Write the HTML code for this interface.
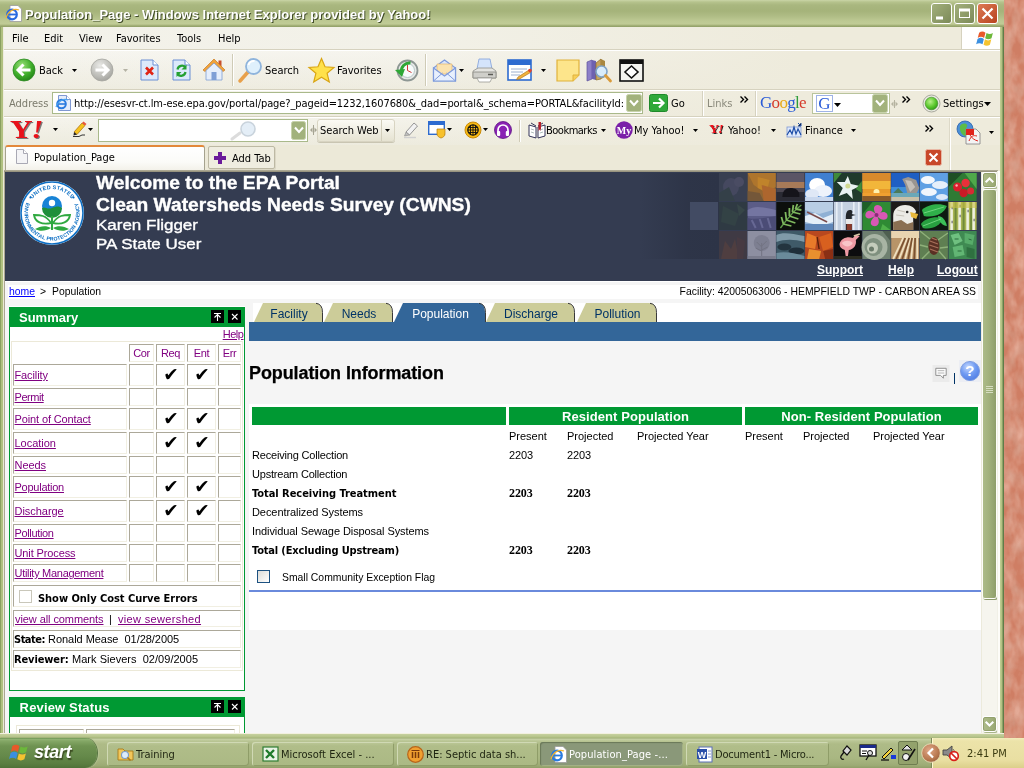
<!DOCTYPE html>
<html><head><meta charset="utf-8"><title>Population_Page</title>
<style>
*{box-sizing:border-box;margin:0;padding:0}
html,body{width:1024px;height:768px;overflow:hidden}
html{background:#cf7e64}
body{opacity:.999}
body{position:relative;background:#d2836a;font-family:"DejaVu Sans Condensed","DejaVu Sans","Liberation Sans",sans-serif;font-size:11px;color:#000}
.abs,.abs>*,.tk>*,.sbb>*,#thumb>*,.wb>*{position:absolute}
.ui{font-family:"DejaVu Sans Condensed","DejaVu Sans","Liberation Sans",sans-serif;font-size:11px;white-space:nowrap}
.ar{font-family:"Liberation Sans",sans-serif}
svg{display:block;overflow:visible}
/* ---------- window frame ---------- */
#desk{left:1004px;top:0;width:20px;height:740px;background:#cf7e64}
#win{left:0;top:0;width:1004px;height:738px;background:#efecdf}
#title{left:0;top:0;width:1004px;height:27px;background:linear-gradient(#cad5a7 0,#b6c38d 2px,#a9b77f 5px,#a5b37a 11px,#afbc85 16px,#bdc993 21px,#c0cb96 24px,#a3b077 25.5px,#8f9d66 27px)}
#title .t{left:25px;top:7px;color:#fff;font-weight:bold;font-size:13px;font-family:"Liberation Sans",sans-serif;text-shadow:1px 1px 0 #3f4a28;white-space:nowrap}
.wb{top:3px;width:21px;height:21px;border:1px solid #fff;border-radius:3px;background:linear-gradient(135deg,#a3b07c,#7c8a58)}
#bL{left:0;top:27px;width:3px;height:711px;background:linear-gradient(90deg,#8aa060 0,#8aa060 1px,#b0c080 1px,#b0c080 3px)}
#bL2{left:3px;top:170px;width:2px;height:563px;background:linear-gradient(90deg,#ebe8d6 0,#ebe8d6 1px,#aaa692 1px)}
#bT2{left:4px;top:170px;width:994px;height:2px;background:linear-gradient(#b5b19c,#8f8b76)}
#bR{left:1000px;top:27px;width:4px;height:711px;background:linear-gradient(90deg,#c3d096 0,#aebd7e 2px,#6a8450 3px,#55743f 4px)}
#bR2{left:997px;top:171px;width:3px;height:562px;background:linear-gradient(90deg,#f1f0e6 0,#f1f0e6 1px,#fdfcf8 1px)}
#bB{left:0;top:733px;width:1004px;height:5px;background:linear-gradient(#f3f1e2 0,#f0eedc 1.5px,#c3cf9b 1.5px,#b5c389 4px,#a3b378 5px)}
/* ---------- chrome bars ---------- */
#menubar{left:4px;top:27px;width:996px;height:23px;background:linear-gradient(90deg,rgba(238,235,220,0) 0,rgba(238,235,220,.15) 40%,rgba(238,235,220,.6) 60%,#eeebdc 80%),#f3f2ea;box-shadow:inset 0 -1px 0 #d6d2bf}
#menubar span{top:5px}
#tb{left:4px;top:50px;width:996px;height:40px;background:linear-gradient(90deg,rgba(238,235,220,0) 0,rgba(238,235,220,.15) 40%,rgba(238,235,220,.6) 60%,#eeebdc 80%),linear-gradient(#f7f6f1,#eeece0);box-shadow:inset 0 1px 0 #fff,inset 0 -1px 0 #d6d2bf}
#ab{left:4px;top:90px;width:996px;height:27px;background:linear-gradient(90deg,rgba(238,235,220,0) 0,rgba(238,235,220,.15) 40%,rgba(238,235,220,.6) 60%,#eeebdc 80%),linear-gradient(#f5f4ed,#eeece0);box-shadow:inset 0 1px 0 #fff,inset 0 -1px 0 #d6d2bf}
#yb{left:4px;top:117px;width:996px;height:28px;background:linear-gradient(90deg,rgba(238,235,220,0) 0,rgba(238,235,220,.15) 40%,rgba(238,235,220,.6) 60%,#eeebdc 80%),linear-gradient(#f5f4ed,#edebde);box-shadow:inset 0 1px 0 #fff}
#tabrow{left:4px;top:145px;width:996px;height:26px;background:#ece9d8}

/* ---------- page ---------- */
#page{left:5px;top:171px;width:976px;height:562px;background:#f5f5f5;overflow:hidden;font-family:"Liberation Sans",sans-serif;font-size:11px}
#page a{color:#800080;text-decoration:underline}
#banner{left:0;top:0;width:976px;height:110px;background:#343c51}
#banner .h{left:91px;color:#fff;white-space:nowrap;transform-origin:0 0;-webkit-text-stroke:.35px #fff}
#banner .lnk{top:92px;color:#fff;font-weight:bold;font-size:12px;text-decoration:underline}
#crumb{left:3px;top:114px;width:970px;height:14px;background:#fff;box-shadow:0 -4px 0 -0px #f5f5f5}
#crumb span{top:1px;white-space:nowrap;font-size:10.4px}
/* summary panel */
.pnl{border:1px solid #009933;background:#fff}
.pnl .hd{left:0;top:0;width:100%;height:20px;background:#009933;color:#fff;font-weight:bold;font-size:13px}
.pnl .hd b{left:10px;top:3px;white-space:nowrap}
.pnl .hd i{top:3px;width:13px;height:13px;background:#000}
.cell>*{position:absolute}
.cell{border:1px solid;border-color:#aca899 #f1efe2 #f1efe2 #aca899;background:#fff;white-space:nowrap}
.ck{font-family:"DejaVu Sans",sans-serif;font-size:18.5px;font-weight:bold;text-align:center;line-height:19px;text-indent:1px}
/* tabs */
.tab{top:132px;height:19px;font-size:12px;color:#003366;text-align:center;line-height:19px}
/* main */
.gh{height:18px;background:#009933;color:#fff;font-weight:bold;font-size:13px;text-align:center;line-height:19px;letter-spacing:.06px}
.r{white-space:nowrap;font-size:11px;letter-spacing:-0.1px}
.bd{font-family:"DejaVu Sans Condensed",sans-serif;font-weight:bold;letter-spacing:-0.12px}
.tm{font-family:"Liberation Serif",serif;font-weight:bold;font-size:12px}

/* ---------- scrollbar ---------- */
#sb{left:981px;top:171px;width:16px;height:562px;background:#f6f5ee;box-shadow:inset 1px 0 0 #eceadb}
.sbb{left:2px;width:13px;height:14px;border:1px solid #93a16d;border-radius:2px;background:linear-gradient(90deg,#adbb88,#9aa973);box-shadow:0 0 0 1px #fff,1px 1px 0 1px #a9b58a}
#thumb{left:2px;top:19px;width:13px;height:408px;border:0;box-shadow:0 0 0 1px #fdfdf8,1px 1px 0 1px #8d9a6c;border-radius:2px;background:linear-gradient(90deg,#adbb88,#a2b17c 45%,#8f9e6a)}
/* ---------- taskbar ---------- */
#task{left:0;top:738px;width:1024px;height:30px;background:linear-gradient(#9aaa72 0,#c8d2a7 1px,#b9c594 3px,#aebb87 6px,#a9b782 20px,#9eac76 27px,#909f68 30px)}
#start{left:0;top:0;width:97px;height:30px;border-radius:0 12px 12px 0/0 15px 15px 0;background:linear-gradient(#5d8a45 0,#94b476 1px,#84a766 3px,#6f9352 8px,#65894a 18px,#5a7d40 26px,#4f7238 30px);box-shadow:1px 0 1px #4a6a36,2px 0 1px #c2cf9e}
#start b{left:34px;top:4px;font-family:"Liberation Sans",sans-serif;font-style:italic;font-weight:bold;font-size:18px;color:#fff;text-shadow:1px 2px 1px #3c4c22;letter-spacing:-.4px}
.tk{top:4px;height:24px;border-radius:3px;background:linear-gradient(#bcc898,#b0bd89 4px,#abb984);box-shadow:inset 1px 1px 0 #d0d9b4,inset -1px -1px 0 #8f9d68;color:#1e2410}
.tk span{left:29px;top:6px;font-family:"DejaVu Sans Condensed","Liberation Sans",sans-serif;font-size:11px;white-space:nowrap}
.tk svg{left:10px;top:4px}
.tk.on{background:#8a9879;box-shadow:inset 1px 1px 1px #6a7858,inset -1px -1px 0 #a3b085;color:#fff}
#tray{left:932px;top:0;width:92px;height:30px;background:linear-gradient(#f3ecbb 0,#ece3a9 3px,#e9dfa2 22px,#dccf8a 30px);box-shadow:inset 1px 0 0 #fff8d0,-1px 0 0 #7d8a58}
#tray span{left:35px;top:9px;font-family:"DejaVu Sans Condensed","Liberation Sans",sans-serif;font-size:11px;color:#3a3a10;white-space:nowrap}
</style></head><body>
<div id="desk" class="abs"></div><svg class="abs" style="left:1004px;top:0" width="20" height="738"><defs><filter id="tx" x="0" y="0" width="100%" height="100%"><feTurbulence type="fractalNoise" baseFrequency="0.09 0.05" numOctaves="3" seed="7"/><feColorMatrix type="matrix" values="0 0 0 0 0.86  0 0 0 0 0.55  0 0 0 0 0.45  1.6 0 0 0 -0.55"/></filter><filter id="tx2" x="0" y="0" width="100%" height="100%"><feTurbulence type="fractalNoise" baseFrequency="0.12 0.07" numOctaves="2" seed="3"/><feColorMatrix type="matrix" values="0 0 0 0 0.66  0 0 0 0 0.36  0 0 0 0 0.27  0 1.8 0 0 -0.75"/></filter></defs><rect width="20" height="738" fill="#cf7e64"/><rect width="20" height="738" filter="url(#tx)" opacity=".8"/><rect width="20" height="738" filter="url(#tx2)" opacity=".8"/></svg>
<div id="win" class="abs">
 <div id="title" class="abs"><div class="t">Population_Page - Windows Internet Explorer provided by Yahoo!</div>
  <div class="wb" style="left:931px"><svg width="19" height="19"><path d="M4 14h7" stroke="#fff" stroke-width="3"/></svg></div><div class="wb" style="left:954px"><svg width="19" height="19"><rect x="4.500" y="5.500" width="10" height="8" fill="none" stroke="#fff" stroke-width="1"/><path d="M4 6h11" stroke="#fff" stroke-width="3"/></svg></div><div class="wb" style="left:977px;background:linear-gradient(135deg,#dd7a55,#b8431f)"><svg width="19" height="19"><path d="M4.500 4.500l10 10M14.500 4.500l-10 10" stroke="#fff" stroke-width="2.200"/></svg></div><svg style="left:5px;top:5px" width="17" height="17" viewBox="0 0 17 17"><path d="M5 .5h8l3.500 3.500v12.500H5z" fill="#fff" stroke="#9a9a9a" stroke-width=".8"/><circle cx="7" cy="9.500" r="4.800" fill="none" stroke="#2a6be0" stroke-width="2.200"/><path d="M2.500 9.500h9" stroke="#2a6be0" stroke-width="1.800"/><path d="M1 13c2-7 8-10 13-8" stroke="#f2b330" stroke-width="1.200" fill="none"/></svg>
 </div>
 <div id="menubar" class="abs ui"><span style="left:8px">File</span><span style="left:40px">Edit</span><span style="left:75px">View</span><span style="left:112px">Favorites</span><span style="left:173px">Tools</span><span style="left:214px">Help</span><div style="left:957px;top:0;width:39px;height:22px;background:#fff;border-left:1px solid #d6d2bf"></div><svg style="left:973px;top:3px" width="18" height="17" viewBox="0 0 17 16"><path d="M2 2.500c2-1.500 4-1.500 6 0l-1.300 5c-2-1.500-4-1.500-6 0z" fill="#e8592a"/><path d="M9 2.800c2 1.300 4 1.300 6 0l-1.300 5c-2 1.300-4 1.300-6 0z" fill="#6cb83a"/><path d="M.5 8.500c2-1.500 4-1.500 6 0l-1.300 5c-2-1.500-4-1.500-6 0z" fill="#3b8fe0"/><path d="M7.500 8.800c2 1.300 4 1.300 6 0l-1.300 5c-2 1.300-4 1.300-6 0z" fill="#f5c330"/></svg></div>
 <div id="tb" class="abs ui"><svg style="left:8px;top:8px" width="24" height="24" viewBox="0 0 24 24"><defs><radialGradient id="gb" cx=".4" cy=".3" r=".8"><stop offset="0" stop-color="#9be07a"/><stop offset=".55" stop-color="#3fae2a"/><stop offset="1" stop-color="#1d7a14"/></radialGradient><radialGradient id="gf" cx=".4" cy=".3" r=".8"><stop offset="0" stop-color="#e9e9e6"/><stop offset=".6" stop-color="#bdbdb8"/><stop offset="1" stop-color="#9c9c97"/></radialGradient></defs><circle cx="12" cy="12" r="11" fill="url(#gb)" stroke="#2c8a22" stroke-width=".8"/><path d="M18.5 12H7M11.5 6.5L6 12l5.500 5.500" stroke="#fff" stroke-width="3" fill="none" stroke-linejoin="miter"/></svg>
<span style="left:35px;top:14px">Back</span>
<svg style="left:68px;top:19px" width="5" height="3" viewBox="0 0 5 3"><path d="M0 0h5L2.5 3z" fill="#000"/></svg>
<svg style="left:86px;top:8px" width="24" height="24" viewBox="0 0 24 24"><circle cx="12" cy="12" r="11" fill="url(#gf)" stroke="#a6a6a0" stroke-width=".8"/><path d="M5.5 12H17M12.5 6.500L18 12l-5.500 5.500" stroke="#fff" stroke-width="3" fill="none"/></svg>
<svg style="left:119px;top:19px" width="5" height="3" viewBox="0 0 5 3"><path d="M0 0h5L2.5 3z" fill="#b5b3a5"/></svg>
<svg style="left:136px;top:9px" width="19" height="22" viewBox="0 0 19 22"><path d="M1 1h12l5 5v15H1z" fill="#dce9fb" stroke="#6b8fd4" stroke-width="1"/><path d="M13 1v5h5" fill="#fff" stroke="#6b8fd4"/><path d="M6 8.500l7 7M13 8.500l-7 7" stroke="#e02414" stroke-width="2.600"/></svg>
<svg style="left:168px;top:9px" width="19" height="22" viewBox="0 0 19 22"><path d="M1 1h12l5 5v15H1z" fill="#dce9fb" stroke="#6b8fd4" stroke-width="1"/><path d="M13 1v5h5" fill="#fff" stroke="#6b8fd4"/><path d="M5.500 10.500a4.500 4.500 0 0 1 8-2" stroke="#25a032" stroke-width="2.200" fill="none"/><path d="M14.500 5.500v5h-5z" fill="#25a032"/><path d="M13.500 13a4.500 4.500 0 0 1-8 2" stroke="#25a032" stroke-width="2.200" fill="none"/><path d="M4.500 18v-5h5z" fill="#25a032"/></svg>
<svg style="left:197px;top:7px" width="26" height="25" viewBox="0 0 26 25"><path d="M17.500 3.500h3v6h-3z" fill="#c7502d"/><path d="M2 13L13 2l11 11-2 1.500L13 6l-9 8.500z" fill="#f0a23c" stroke="#c97a1e" stroke-width=".7"/><path d="M5 13.500l8-7.500 8 7.500V23H5z" fill="#e6eefb" stroke="#7f9fd6" stroke-width=".8"/><path d="M10.500 15h5v8h-5z" fill="#7f9fd6"/></svg>
<div style="left:228px;top:4px;width:1px;height:32px;background:#cfcbb6;border-right:1px solid #fff;box-sizing:content-box"></div>
<svg style="left:233px;top:7px" width="27" height="27" viewBox="0 0 27 27"><path d="M3 24l8-9" stroke="#e8a04a" stroke-width="3.500" stroke-linecap="round"/><circle cx="16.500" cy="9.500" r="7.500" fill="#dff0fc" stroke="#8fb4dc" stroke-width="1.800"/><path d="M11.500 8a5.500 5.500 0 0 1 6-4" stroke="#fff" stroke-width="2" fill="none"/></svg>
<span style="left:261px;top:14px">Search</span>
<svg style="left:304px;top:7px" width="27" height="26" viewBox="0 0 27 26"><path d="M13.500 1.500l3.500 8.300 9 .7-6.900 5.800 2.200 8.700-7.800-4.700-7.800 4.700 2.200-8.700L1 10.500l9-.7z" fill="#ffe14a" stroke="#d9a514" stroke-width="1.200"/></svg>
<span style="left:333px;top:14px">Favorites</span>
<svg style="left:390px;top:8px" width="25" height="25" viewBox="0 0 25 25"><circle cx="13.500" cy="12.500" r="10" fill="#e6e8e6" stroke="#8e9794" stroke-width="1.800"/><circle cx="13.500" cy="12.500" r="7" fill="#f7fbfb" stroke="#b9c8c8"/><path d="M13.500 12.500V7M13.500 12.500l4 2" stroke="#c33" stroke-width="1"/><path d="M1 12l7 7 3-8z" fill="#2ea736"/><path d="M7.500 14a8 8 0 0 1 9-9" stroke="#2ea736" stroke-width="3" fill="none"/></svg>
<div style="left:421px;top:4px;width:1px;height:32px;background:#cfcbb6;border-right:1px solid #fff;box-sizing:content-box"></div>
<svg style="left:428px;top:8px" width="25" height="25" viewBox="0 0 25 25"><path d="M1.500 10l11-8 11 8v13h-22z" fill="#dbe6fa" stroke="#7e9bdc" stroke-width="1.200"/><path d="M5 6h15v10H5z" fill="#fbe3b0" stroke="#e0b060" stroke-width=".6"/><path d="M1.500 10l11 8 11-8v13h-22z" fill="#e8f0fd" stroke="#7e9bdc" stroke-width="1.200"/><path d="M1.500 23l9-8M23.500 23l-9-8" stroke="#7e9bdc"/></svg>
<svg style="left:455px;top:19px" width="5" height="3" viewBox="0 0 5 3"><path d="M0 0h5L2.5 3z" fill="#000"/></svg>
<svg style="left:467px;top:8px" width="27" height="25" viewBox="0 0 27 25"><path d="M8 1h11l2 10H6z" fill="#d4e4fb" stroke="#8aa7dc" stroke-width=".9"/><path d="M2 13l5-3h14l4 3v7H2z" fill="#e4e4e0" stroke="#9a9a94" stroke-width=".9"/><path d="M2 14h23v6H2z" fill="#cfcfca" stroke="#8e8e88" stroke-width=".9"/><path d="M6 20h15l-2 4H8z" fill="#fff" stroke="#9a9a94" stroke-width=".8"/><path d="M17 16.500h5" stroke="#5a5a55" stroke-width="1.500"/></svg>
<svg style="left:503px;top:9px" width="26" height="23" viewBox="0 0 26 23"><rect x="1" y="1" width="23" height="20" fill="#fff" stroke="#2d6bd0" stroke-width="1.600"/><rect x="1" y="1" width="23" height="5" fill="#2d6bd0"/><path d="M4 10h16M4 13h12M4 16h9" stroke="#9db0cf" stroke-width="1"/><path d="M11 18l11-7 1.500 2.500-11 6.500-3 .5z" fill="#f2b23c" stroke="#a86b10" stroke-width=".6"/><circle cx="23" cy="11.500" r="1.800" fill="#e2452c"/></svg>
<svg style="left:537px;top:19px" width="5" height="3" viewBox="0 0 5 3"><path d="M0 0h5L2.5 3z" fill="#000"/></svg>
<svg style="left:552px;top:9px" width="24" height="23" viewBox="0 0 24 23"><path d="M1 1h22v15l-6 6H1z" fill="#fde58b" stroke="#e0b13a" stroke-width="1.200"/><path d="M17 22v-6h6" fill="#f7cf5a" stroke="#e0b13a"/></svg>
<svg style="left:581px;top:7px" width="27" height="27" viewBox="0 0 27 27"><path d="M2 5l5-2v19l-5 2z" fill="#8c7fc8" stroke="#5d529c" stroke-width=".7"/><path d="M7 3l4 1v19l-4-1z" fill="#6d61b0"/><path d="M11 6l5-4v20l-5 1z" fill="#c9a55c" stroke="#8b6b2a" stroke-width=".7"/><path d="M16 2l4 2v16l-4 2z" fill="#a9873f"/><circle cx="16.500" cy="14.500" r="5.500" fill="#d8ecfb" stroke="#7fa3c8" stroke-width="1.600"/><path d="M20.500 18.500l5 5.500" stroke="#d99b3c" stroke-width="2.800" stroke-linecap="round"/></svg>
<svg style="left:615px;top:9px" width="25" height="23" viewBox="0 0 25 23"><rect x="1" y="1" width="23" height="21" fill="#f4f4f0" stroke="#111" stroke-width="1.600"/><rect x="1" y="1" width="23" height="4" fill="#111"/><path d="M12.500 7l6.500 6-6.500 6-6.500-6z" fill="#fff" stroke="#111" stroke-width="1.600"/></svg></div>
 <div id="ab" class="abs ui"><span style="left:5px;top:7px;color:#7b7a6c">Address</span>
<div style="left:48px;top:2px;width:591px;height:22px;background:#fff;border:1px solid #a9b98a"></div>
<svg style="left:51px;top:5px" width="16" height="16" viewBox="0 0 16 16"><path d="M3.500.500h8l4 4v11h-12z" fill="#e4ecfb" stroke="#7f98d2"/><path d="M11.500.500v4h4" fill="#fff" stroke="#7f98d2"/><circle cx="6.500" cy="9" r="4.300" fill="none" stroke="#2a7be0" stroke-width="2"/><path d="M2.500 9h8" stroke="#2a7be0" stroke-width="1.600"/><path d="M1 12c2-6 8-9 12-7" stroke="#4aa3f0" stroke-width="1.200" fill="none"/></svg>
<span style="left:70px;top:7px;letter-spacing:-0.08px">http://esesvr-ct.lm-ese.epa.gov/portal/page?_pageid=1232,1607680&amp;_dad=portal&amp;_schema=PORTAL&amp;facilityId:</span>
<svg style="left:622px;top:4px" width="16" height="18" viewBox="0 0 16 18"><rect x=".5" y=".5" width="15" height="17" rx="2" fill="#a2b27c" stroke="#c7d2ab"/><path d="M4 6.500l4 4.500 4-4.500" stroke="#fff" stroke-width="2" fill="none"/></svg>
<svg style="left:645px;top:4px" width="19" height="18" viewBox="0 0 19 18"><rect x=".5" y=".5" width="18" height="17" rx="2" fill="#2fa83a" stroke="#1f8a2a"/><path d="M4 9h10M10 4.500l4.500 4.500-4.500 4.500" stroke="#fff" stroke-width="2.200" fill="none"/></svg>
<span style="left:667px;top:7px">Go</span>
<div style="left:698px;top:1px;width:2px;height:25px;border-left:1px solid #d6d2c0;border-right:1px solid #fff"></div>
<span style="left:703px;top:7px;color:#8a897b">Links</span>
<svg style="left:736px;top:6px" width="9" height="7" viewBox="0 0 9 7"><path d="M.5.500l3 3-3 3M4.500.500l3 3-3 3" stroke="#000" stroke-width="1.400" fill="none"/></svg>
<div style="left:751px;top:1px;width:2px;height:25px;border-left:1px solid #d6d2c0;border-right:1px solid #fff"></div>
<span style="left:756px;top:3px;font-family:'Liberation Serif',serif;font-size:17px;letter-spacing:-0.7px"><span style="position:static;color:#2a5bd7">G</span><span style="position:static;color:#d63a2a">o</span><span style="position:static;color:#e8a916">o</span><span style="position:static;color:#2a5bd7">g</span><span style="position:static;color:#2f9c3a">l</span><span style="position:static;color:#d63a2a">e</span></span>
<div style="left:808px;top:3px;width:78px;height:21px;background:#fff;border:1px solid #b9c49c"></div>
<div style="left:812px;top:5px;width:17px;height:17px;background:#fff;border:1px solid #9fb3e6;color:#2a5bd7;font-family:'Liberation Serif',serif;font-size:17px;line-height:15px;text-align:center">G</div>
<svg style="left:830px;top:13px" width="7" height="4" viewBox="0 0 7 4"><path d="M0 0h7L3.5 4z" fill="#000"/></svg>
<svg style="left:868px;top:4px" width="16" height="19" viewBox="0 0 16 19"><rect x=".5" y=".5" width="15" height="18" rx="2" fill="#a2b27c" stroke="#c7d2ab"/><path d="M4 6.500l4 4.500 4-4.500" stroke="#fff" stroke-width="2" fill="none"/></svg>
<svg style="left:887px;top:10px" width="7" height="8" viewBox="0 0 7 8"><path d="M3.500 0v8" stroke="#b5b3a0"/><path d="M0 4l2.500-2.500v5zM7 4l-2.500-2.500v5z" fill="#b5b3a0"/></svg>
<svg style="left:898px;top:6px" width="9" height="7" viewBox="0 0 9 7"><path d="M.5.500l3 3-3 3M4.500.500l3 3-3 3" stroke="#000" stroke-width="1.400" fill="none"/></svg>
<svg style="left:918px;top:4px" width="19" height="19" viewBox="0 0 19 19"><defs><radialGradient id="gs" cx=".4" cy=".35" r=".7"><stop offset="0" stop-color="#b8f08a"/><stop offset=".6" stop-color="#5cc82e"/><stop offset="1" stop-color="#2f9a18"/></radialGradient></defs><circle cx="9.500" cy="9.500" r="8.500" fill="#e9e9e2" stroke="#a8a89c"/><circle cx="9.500" cy="9.500" r="6.300" fill="url(#gs)" stroke="#3a8a22" stroke-width=".6"/></svg>
<span style="left:939px;top:7px">Settings</span>
<svg style="left:980px;top:12px" width="7" height="4" viewBox="0 0 7 4"><path d="M0 0h7L3.5 4z" fill="#000"/></svg></div>
 <div id="yb" class="abs ui"><span style="left:6px;top:0px;font-family:'Liberation Serif',serif;font-weight:bold;font-size:25px;color:#e8111a;letter-spacing:-1px;line-height:26px;text-shadow:1px 1px 0 #7a7a7a;transform:scaleX(1.25);transform-origin:0 0">Y<i style="position:static">!</i></span>
<svg style="left:49px;top:11px" width="5" height="3" viewBox="0 0 5 3"><path d="M0 0h5L2.5 3z" fill="#000"/></svg>
<svg style="left:68px;top:4px" width="17" height="17" viewBox="0 0 17 17"><path d="M2 11l8-9 3 2.500-8 9z" fill="#f6c21c" stroke="#a86b10" stroke-width=".7"/><path d="M10 2l1.500-1.500 3 2.500L13 4.500z" fill="#e8553a"/><path d="M2 11l-.5 3.500 3.500-1z" fill="#222"/><path d="M1 15.500h6l3-1.500h3" stroke="#333" stroke-width="1" fill="none"/></svg>
<svg style="left:84px;top:11px" width="5" height="3" viewBox="0 0 5 3"><path d="M0 0h5L2.5 3z" fill="#000"/></svg>
<div style="left:94px;top:2px;width:210px;height:23px;background:#fff;border:1px solid #a9b98a"></div>
<svg style="left:226px;top:4px" width="30" height="20" viewBox="0 0 30 20"><path d="M2 18l8-6" stroke="#dcdcdc" stroke-width="3" stroke-linecap="round"/><circle cx="18" cy="8" r="7" fill="#e4eef7" stroke="#c9d3dc" stroke-width="1.600"/></svg>
<svg style="left:287px;top:4px" width="15" height="19" viewBox="0 0 15 19"><rect x=".5" y=".5" width="14" height="18" rx="2" fill="#a2b27c" stroke="#c7d2ab"/><path d="M4 6.500l4 4.500 4-4.500" stroke="#fff" stroke-width="2" fill="none"/></svg>
<svg style="left:306px;top:8px" width="7" height="10" viewBox="0 0 7 10"><path d="M3.500 0v10" stroke="#a5a392"/><path d="M0 5l2.500-2.500v5zM7 5l-2.500-2.500v5z" fill="#a5a392"/></svg>
<div style="left:313px;top:2px;width:78px;height:23px;border:1px solid #d8d4c2;border-radius:3px;background:linear-gradient(#fbfaf4,#e6e3d2);box-shadow:0 1px 0 #c9c5b2"></div>
<div style="left:377px;top:3px;width:1px;height:21px;background:#d2cebb"></div>
<span style="left:316px;top:7px">Search Web</span>
<svg style="left:381px;top:12px" width="5" height="3" viewBox="0 0 5 3"><path d="M0 0h5L2.5 3z" fill="#000"/></svg>
<svg style="left:399px;top:4px" width="17" height="17" viewBox="0 0 17 17"><path d="M3 11l8-9 3.500 3-8 9z" fill="#f2f2f2" stroke="#8a8a8a" stroke-width=".9"/><path d="M3 11l-1.500 4 5-1z" fill="#bdbdbd" stroke="#8a8a8a" stroke-width=".6"/><path d="M1 16.500h12" stroke="#d0d0d0" stroke-width="1.400"/></svg>
<svg style="left:424px;top:4px" width="18" height="17" viewBox="0 0 18 17"><rect x=".7" y=".7" width="15.600" height="12.600" fill="#fff" stroke="#2d6bd0" stroke-width="1.400"/><rect x=".7" y=".7" width="15.600" height="3.300" fill="#2d6bd0"/><path d="M9 8h8v5c0 2-2 3.500-4 4-2-.5-4-2-4-4z" fill="#f7c12c" stroke="#b47d0e" stroke-width=".7"/></svg>
<svg style="left:443px;top:11px" width="5" height="3" viewBox="0 0 5 3"><path d="M0 0h5L2.5 3z" fill="#000"/></svg>
<svg style="left:460px;top:4px" width="18" height="18" viewBox="0 0 18 18"><circle cx="9" cy="9" r="8" fill="#f7b912" stroke="#c98a08" stroke-width="1"/><circle cx="9" cy="9" r="5.200" fill="none" stroke="#111" stroke-width="1.200"/><path d="M3.800 9h10.400M9 3.800v10.400M6.500 4.500v9M11.500 4.500v9M4.500 6.500h9M4.500 11.500h9" stroke="#111" stroke-width=".9"/></svg>
<svg style="left:479px;top:11px" width="5" height="3" viewBox="0 0 5 3"><path d="M0 0h5L2.5 3z" fill="#000"/></svg>
<svg style="left:490px;top:4px" width="18" height="18" viewBox="0 0 18 18"><circle cx="9" cy="9" r="8.500" fill="#8a22b4" stroke="#5d1480" stroke-width=".8"/><path d="M4 11.500V9a5 5 0 0 1 10 0v2.500" stroke="#fff" stroke-width="1.700" fill="none"/><rect x="3" y="10" width="3.200" height="5" rx="1" fill="#fff"/><rect x="11.800" y="10" width="3.200" height="5" rx="1" fill="#fff"/></svg>
<div style="left:515px;top:3px;width:2px;height:22px;border-left:1px solid #cfcbb6;border-right:1px solid #fff"></div>
<svg style="left:524px;top:4px" width="18" height="18" viewBox="0 0 18 18"><path d="M1 4l7 2v11l-7-2z" fill="#fff" stroke="#35355a" stroke-width="1"/><path d="M17 4l-7 2v11l7-2z" fill="#fff" stroke="#35355a" stroke-width="1"/><path d="M3 2l5 3M15 2l-5 3" stroke="#35355a"/><path d="M10.500 1h2.500v9l-1.200-1.500L10.500 10z" fill="#b8202a"/><path d="M3 8l3 1M3 11l3 1M12 9l3-1M12 12l3-1" stroke="#9aa" stroke-width=".8"/></svg>
<span style="left:542px;top:7px;letter-spacing:-.5px">Bookmarks</span>
<svg style="left:597px;top:12px" width="5" height="3" viewBox="0 0 5 3"><path d="M0 0h5L2.5 3z" fill="#000"/></svg>
<svg style="left:611px;top:4px" width="18" height="18" viewBox="0 0 18 18"><circle cx="9" cy="9" r="8.700" fill="#7a1fa8"/><text x="9" y="12.500" text-anchor="middle" font-family="Liberation Serif, serif" font-weight="bold" font-size="10" fill="#fff">My</text></svg>
<span style="left:630px;top:7px">My Yahoo!</span>
<svg style="left:689px;top:12px" width="5" height="3" viewBox="0 0 5 3"><path d="M0 0h5L2.5 3z" fill="#000"/></svg>
<span style="left:705px;top:6px;font-family:'Liberation Serif',serif;font-weight:bold;font-size:12px;line-height:13px;color:#f0101a;letter-spacing:-1.2px;transform:scaleX(1.2);transform-origin:0 0;text-shadow:.7px 1px 0 #222">Y<i style="position:static">!</i></span>
<span style="left:724px;top:7px">Yahoo!</span>
<svg style="left:767px;top:12px" width="5" height="3" viewBox="0 0 5 3"><path d="M0 0h5L2.5 3z" fill="#000"/></svg>
<svg style="left:782px;top:5px" width="17" height="16" viewBox="0 0 17 16"><rect x="1" y="5" width="14" height="10" fill="#dfe9fb" stroke="#7f98d2" stroke-width=".8"/><path d="M1 13l3-5 2 4 2-7 2 7 2-5 3 6" stroke="#1f4fa8" stroke-width="1.200" fill="none"/><path d="M12 1l3 3M15 1v3h-3" stroke="#1f4fa8" stroke-width="1"/></svg>
<span style="left:801px;top:7px">Finance</span>
<svg style="left:847px;top:12px" width="5" height="3" viewBox="0 0 5 3"><path d="M0 0h5L2.5 3z" fill="#000"/></svg>
<svg style="left:921px;top:8px" width="9" height="7" viewBox="0 0 9 7"><path d="M.5.500l3 3-3 3M4.500.500l3 3-3 3" stroke="#000" stroke-width="1.400" fill="none"/></svg>

<svg style="left:952px;top:3px" width="26" height="25" viewBox="0 0 26 25"><circle cx="9" cy="9" r="8" fill="#4a8fd8" stroke="#2a5fa8" stroke-width=".8"/><path d="M4 6c2-3 6-3 7-1s-2 3-1 5 4 1 5 3-3 4-6 3-6-5-5-10z" fill="#5dbb46"/><path d="M10 9h10l4 4v11H10z" fill="#f4f4f4" stroke="#8a8a8a" stroke-width=".9"/><path d="M10 9h8v6h-8z" fill="#e0231c"/><path d="M13 21c2-5 4-6 8-5M14 15c2 3 4 5 8 6" stroke="#e0231c" stroke-width="1" fill="none"/></svg>
<svg style="left:985px;top:14px" width="5" height="3" viewBox="0 0 5 3"><path d="M0 0h5L2.5 3z" fill="#000"/></svg></div>
 <div id="tabrow" class="abs ui"><div style="left:1px;top:0px;width:200px;height:27px;background:linear-gradient(#fff,#fbfbf8 60%,#f1efe6);border:1px solid #a5a28e;border-top:2px solid #e3883a;border-bottom:0;border-radius:3px 3px 0 0"></div>
<svg style="left:12px;top:4px" width="12" height="15" viewBox="0 0 12 15"><path d="M.5.500h7l4 4v10H.5z" fill="#f4f4f6" stroke="#a9a9b4"/><path d="M7.500.500v4h4" fill="#fff" stroke="#a9a9b4"/></svg>
<span style="left:30px;top:6px">Population_Page</span>
<div style="left:204px;top:1px;width:67px;height:23px;border:1px solid #bdb9a4;border-radius:2px;background:#efede0;box-shadow:1px 1px 0 #dcd8c6"></div>
<svg style="left:210px;top:7px" width="12" height="12" viewBox="0 0 12 12"><path d="M6 0v12M0 6h12" stroke="#6a1a9a" stroke-width="4"/></svg>
<span style="left:228px;top:7px">Add Tab</span>
<svg style="left:921px;top:4px" width="17" height="17" viewBox="0 0 17 17"><rect x=".5" y=".5" width="16" height="16" rx="2" fill="#c8482a" stroke="#e9b9a6"/><path d="M4.500 4.500l8 8M12.500 4.500l-8 8" stroke="#fff" stroke-width="2"/></svg></div>

 <div id="page" class="abs">
  <div id="banner" class="abs">
<svg style="left:14px;top:9px" width="66" height="66" viewBox="-33 -33 66 66">
<circle r="32" fill="#fff"/><circle r="31" fill="none" stroke="#0d6fc4" stroke-width="1.600"/>
<defs><path id="arcT" d="M-24 0A24 24 0 0 1 24 0"/><path id="arcB" d="M-21.14 -17.74A27.6 27.6 0 1 0 21.14 -17.74"/></defs>
<text font-family="Liberation Sans, sans-serif" font-weight="bold" font-size="5.400" fill="#0d6fc4" letter-spacing=".25"><textPath href="#arcT" startOffset="50%" text-anchor="middle">UNITED STATES</textPath></text>
<text font-family="Liberation Sans, sans-serif" font-weight="bold" font-size="5.200" fill="#0d6fc4" letter-spacing=".12"><textPath href="#arcB" startOffset="50%" text-anchor="middle">ENVIRONMENTAL PROTECTION AGENCY</textPath></text>
<circle cx="-21.500" cy="-15.500" r="1.100" fill="#0d6fc4"/><circle cx="21.500" cy="-15.500" r="1.100" fill="#0d6fc4"/>
<circle cx="0" cy="-7" r="10" fill="#1783d6"/><circle cx="0" cy="-10" r="3.200" fill="#fff"/>
<path d="M-10-5c3-2 5 2 10 0s7-2 10 0a10 10 0 0 1-20 0z" fill="#1f8f3a"/>
<path d="M0 17V3" stroke="#2fa83f" stroke-width="2"/>
<path d="M-1 10C-6 2-12 2-18 2c1 7 8 10 17 8z" fill="#fff" stroke="#2fa83f" stroke-width="1.800"/>
<path d="M1 10C6 2 12 2 18 2c-1 7-8 10-17 8z" fill="#fff" stroke="#2fa83f" stroke-width="1.800"/>
<path d="M-1 15c-5-3-11-2-16 1 5 3 11 2 16-1z" fill="#2fa83f"/><path d="M1 15c5-3 11-2 16 1-5 3-11 2-16-1z" fill="#2fa83f"/>
</svg>
<svg style="left:627px;top:1.6px" width="346" height="87" viewBox="0 0 346 87">
<defs><linearGradient id="mf" x1="0" x2="1"><stop offset="0" stop-color="#2d3447" stop-opacity="0"/><stop offset=".6" stop-color="#2d3447" stop-opacity=".9"/><stop offset="1" stop-color="#2d3447" stop-opacity="1"/></linearGradient></defs><rect x="8" y="0" width="79" height="86" fill="url(#mf)"/>
<rect x="58" y="29" width="28" height="28" fill="#424b63"/>




<g transform="translate(87.0,0)" opacity="0.45"><rect width="28" height="28" fill="#3d4453"/><ellipse cx="12" cy="14" rx="8" ry="9" fill="#5a5870"/><ellipse cx="20" cy="9" rx="5" ry="5" fill="#66607a"/><path d="M0 20l10-6 6 14H0z" fill="#34463f"/></g>
<g transform="translate(115.7,0)" opacity="0.92"><rect width="28" height="28" fill="#9a6a30"/><path d="M0 0h28v14l-10 6L6 12z" fill="#b97a2a"/><path d="M10 4l12 3-3 12-9-4z" fill="#cc8a28"/><path d="M14 12l14 4v12H16z" fill="#b86a2c"/><path d="M0 18l12 2 4 8H0z" fill="#7a5a38"/></g>
<g transform="translate(144.4,0)" opacity="1"><rect width="28" height="28" fill="#2a2a33"/><rect width="28" height="9" fill="#5b5566"/><rect y="9" width="28" height="6" fill="#a77a58"/><rect y="15" width="28" height="4" fill="#4b4650"/><path d="M6 24c0-6 3-9 8-9s8 2 9 6v3z" fill="#15141a"/></g>
<g transform="translate(173.1,0)" opacity="1"><rect width="28" height="28" fill="#3f7fd0"/><ellipse cx="12" cy="12" rx="8" ry="7" fill="#fff"/><ellipse cx="18" cy="18" rx="9" ry="6" fill="#eef3fb"/><ellipse cx="7" cy="21" rx="7" ry="5" fill="#dfe8f6"/><rect y="24" width="28" height="4" fill="#c9d8ee"/></g>
<g transform="translate(201.8,0)" opacity="1"><rect width="28" height="28" fill="#1f3a2c"/><path d="M14 3l3 8 9 2-8 4 1 9-6-6-8 3 4-8-6-6 8 0z" fill="#e8f2f2"/><circle cx="14" cy="13" r="2.500" fill="#cfd890"/><path d="M0 0h8l-8 10z" fill="#3f8a3a"/><path d="M28 8v12l-6-4z" fill="#3f8a3a"/></g>
<g transform="translate(230.5,0)" opacity="1"><rect width="28" height="28" fill="#e89a2a"/><rect width="28" height="8" fill="#d88a2c"/><rect y="8" width="28" height="8" fill="#f2b63a"/><circle cx="14" cy="19" r="3" fill="#fff2b0"/><rect y="20" width="28" height="3" fill="#f0a030"/><rect y="23" width="28" height="5" fill="#8a5a28"/></g>
<g transform="translate(259.2,0)" opacity="1"><rect width="28" height="28" fill="#1f5fc4"/><rect y="14" width="28" height="6" fill="#3f8fd8"/><path d="M11 6l6-2 8 3 3 8-4 8-8-3-2-8z" fill="#9a9590"/><path d="M14 7l6 1 4 6-5 5z" fill="#c4bfb8"/><path d="M2 20l5-5 5 5z" fill="#4a7a5a"/><rect y="20" width="28" height="4" fill="#6aa8b8"/><rect y="24" width="28" height="4" fill="#c8c0a8"/></g>
<g transform="translate(287.9,0)" opacity="1"><rect width="28" height="28" fill="#5fa0e4"/><ellipse cx="8" cy="7" rx="7" ry="4" fill="#f4f8fd"/><ellipse cx="20" cy="12" rx="8" ry="4" fill="#e6effa"/><ellipse cx="9" cy="19" rx="8" ry="4" fill="#f0f5fc"/><ellipse cx="22" cy="24" rx="6" ry="3" fill="#dce8f8"/></g>
<g transform="translate(316.6,0)" opacity="1"><rect width="28" height="28" fill="#2f7a34"/><path d="M0 0h14L0 14z" fill="#1f4f24"/><path d="M16 0h12v16z" fill="#4fa84a"/><circle cx="9" cy="14" r="4.500" fill="#d81f2c"/><circle cx="17" cy="10" r="4.200" fill="#e8303a"/><circle cx="15" cy="20" r="4.200" fill="#c81a26"/><circle cx="22" cy="18" r="3.500" fill="#d82a34"/><circle cx="8" cy="12.500" r="1.200" fill="#ffb0b0"/></g>
<g transform="translate(87.0,29)" opacity="0.5"><rect width="28" height="28" fill="#2c3a36"/><path d="M4 4l16 8-4 12L2 20z" fill="#33483a"/><path d="M18 2l8 6-6 6z" fill="#3a5040"/></g>
<g transform="translate(115.7,29)" opacity="0.92"><rect width="28" height="28" fill="#5f5f8c"/><path d="M0 8c6-4 12-4 28 0v6H0z" fill="#7a7aa8"/><path d="M0 16c8 2 16 0 28-2v14H0z" fill="#4e4e7a"/><path d="M4 18l4 8M12 17l3 9M20 16l3 10" stroke="#6c6c9a" stroke-width="2"/></g>
<g transform="translate(144.4,29)" opacity="1"><rect width="28" height="28" fill="#0c0f0c"/><path d="M4 26C10 18 18 8 25 3" stroke="#5f9a4a" stroke-width="1.400" fill="none"/><path d="M7 22l8 2M10 18l9 3M13 14l9 3M16 10l8 2M19 7l6 1M7 22l-2-7M10 18l-1-8M13 14l0-8M16 10l1-7M19 7l2-5" stroke="#7fb85f" stroke-width="1.800"/></g>
<g transform="translate(173.1,29)" opacity="1"><rect width="28" height="28" fill="#8fb0d4"/><path d="M0 0h28v8L14 12 0 8z" fill="#b8cde4"/><path d="M0 14l10-3 8 5 10-4v8l-12 4L0 20z" fill="#e4eef8"/><path d="M2 10l20 10" stroke="#7a4a4a" stroke-width="1.600"/><rect y="22" width="28" height="6" fill="#5f86b8"/></g>
<g transform="translate(201.8,29)" opacity="1"><rect width="28" height="28" fill="#c4d0e0"/><path d="M3 0v28M8 0v28M20 0v28M25 0v28" stroke="#e8eef6" stroke-width="1.600"/><path d="M12 28V16c0-5 1-8 4-8s3 2 2 4l4 1-4 1v14z" fill="#23262a"/><rect x="12" y="17" width="7" height="5" fill="#e8e8e8"/><rect x="13" y="22" width="5" height="6" fill="#8a3a2a"/></g>
<g transform="translate(230.5,29)" opacity="1"><rect width="28" height="28" fill="#2f8a34"/><path d="M0 0h10L0 12z" fill="#1f5f28"/><path d="M14 13C8 4 14 1 18 4s1 7-4 9c7-6 12-2 11 2s-7 4-11-2c5 8 1 12-3 11s-4-6 3-11C6 19 2 16 3 12s6-5 11 1z" fill="#d858b4"/><circle cx="14" cy="13" r="2" fill="#8a2a78"/><path d="M20 22l8 6h-10z" fill="#4fb04a"/></g>
<g transform="translate(259.2,29)" opacity="1"><rect width="28" height="28" fill="#1c1a18"/><path d="M2 28V14c0-7 5-11 12-11 6 0 10 3 11 7l-3 3v15z" fill="#ecebe6"/><path d="M2 28v-8l8-2 6 4 6-2v8z" fill="#8a6f52"/><path d="M19 10l8 2-2 5-5-2z" fill="#e8b83a"/><circle cx="16" cy="10" r="1.300" fill="#222"/><path d="M6 8l8 2M5 13l8 1" stroke="#c8c4ba" stroke-width="1"/></g>
<g transform="translate(287.9,29)" opacity="1"><rect width="28" height="28" fill="#0e1a10"/><path d="M2 8C8 2 20 1 27 4 24 12 14 16 4 14z" fill="#2fb04a"/><path d="M1 22c4-6 14-8 22-6-2 8-12 12-20 10z" fill="#28a040"/><path d="M18 14c4 0 8 4 9 10-4 0-8-4-9-10z" fill="#3cc058"/><path d="M4 11l20-6M3 24l18-7" stroke="#7fe08a" stroke-width=".8"/></g>
<g transform="translate(316.6,29)" opacity="1"><rect width="28" height="28" fill="#a8b454"/><path d="M3 0v28M11 0v28M19 0v28M25 0v28" stroke="#eef0e0" stroke-width="2.600"/><path d="M7 0v28M15 0v28M22.500 0v28" stroke="#6f8a3a" stroke-width="2"/><path d="M3 6h1M11 14h1M19 9h1M25 18h1M3 20h1M11 4h1" stroke="#555" stroke-width="2.600"/><rect width="28" height="6" fill="#c8c04a" opacity=".6"/></g>
<g transform="translate(87.0,58)" opacity="0.5"><rect width="28" height="28" fill="#4b3a38"/><path d="M2 28l4-18 6 8 4-10 4 20z" fill="#6a4030"/><path d="M18 6l8 4-2 18h-6z" fill="#5a3a34"/></g>
<g transform="translate(115.7,58)" opacity="0.8"><rect width="28" height="28" fill="#9c9cae"/><rect width="28" height="28" fill="#a4a4b6"/><circle cx="14" cy="12" r="8" fill="#9090a2"/><path d="M14 12v14M14 16l-5-5M14 15l5-5M14 20l-6-3M14 19l6-3" stroke="#82828f" stroke-width="1"/><rect y="25" width="28" height="3" fill="#8c8c9c"/></g>
<g transform="translate(144.4,58)" opacity="1"><rect width="28" height="28" fill="#3f5a68"/><path d="M0 4c6-3 14-2 28 1v6C18 8 8 8 0 11z" fill="#7f9aa8"/><ellipse cx="8" cy="16" rx="7" ry="3.500" fill="#23343f"/><ellipse cx="20" cy="20" rx="8" ry="3.500" fill="#1f2f3a"/><path d="M0 22c8-2 18 0 28 3v3H0z" fill="#6a8a9a"/></g>
<g transform="translate(173.1,58)" opacity="1"><rect width="28" height="28" fill="#b8481f"/><path d="M2 2l10 4-2 12-10-2z" fill="#e87a2a"/><path d="M14 6l12-4 2 14-10 4z" fill="#d8601f"/><path d="M4 18l12 2-2 8H2z" fill="#e8902f"/><path d="M18 20l10-2v10h-8z" fill="#8a2f14"/><path d="M12 6l2 12" stroke="#5a1f0a" stroke-width="1.400"/></g>
<g transform="translate(201.8,58)" opacity="1"><rect width="28" height="28" fill="#0c0c0e"/><path d="M6 12c2-5 8-7 13-5l3-3 4 1-4 4c1 5-2 9-7 10l-1 7h-2l-1-7c-4-1-6-4-5-7z" fill="#ee9aa4"/><path d="M8 12c3-3 8-3 11 0-2 4-8 5-11 0z" fill="#f8c4c8"/><path d="M20 5l6-2" stroke="#d8c8a8" stroke-width="1.800"/><rect y="25" width="28" height="3" fill="#2a2a1e"/></g>
<g transform="translate(230.5,58)" opacity="1"><rect width="28" height="28" fill="#6f8070"/><circle cx="12" cy="16" r="13" fill="#a8b4a4"/><circle cx="11" cy="16" r="9" fill="#7f907f"/><circle cx="10" cy="17" r="5.500" fill="#c4ccbc"/><circle cx="9" cy="18" r="2.500" fill="#6a7a6a"/><path d="M20 0h8v10z" fill="#4f5f50"/></g>
<g transform="translate(259.2,58)" opacity="1"><rect width="28" height="28" fill="#b89468"/><rect width="28" height="7" fill="#e8d4b0"/><path d="M2 28L12 7M8 28l8-21M14 28l5-21M20 28l2-21M26 28V7" stroke="#f0e0c0" stroke-width="1.800"/><path d="M5 28L14 7M11 28l7-21M17 28l4-21M23 28l1-21" stroke="#7a5030" stroke-width="1.600"/></g>
<g transform="translate(287.9,58)" opacity="1"><rect width="28" height="28" fill="#5f7f52"/><path d="M0 0l10 8M28 2L18 9M0 14l8 2M28 16l-8 1M2 28l8-8M26 28l-7-8" stroke="#8fb07a" stroke-width="1.400"/><ellipse cx="14" cy="15" rx="5.500" ry="9" fill="#5a3024"/><path d="M10 10l8 3M9.500 14l9 3M10 18l8 3M12 7l5 2" stroke="#a8705a" stroke-width="1.200"/></g>
<g transform="translate(316.6,58)" opacity="1"><rect width="28" height="28" fill="#3f8a52"/><path d="M2 4l8-2 4 8-8 4z" fill="#6fc080"/><path d="M16 2l10 2-2 10-8-2z" fill="#58ac6a"/><path d="M4 16l10-2 2 10-10 2z" fill="#62b674"/><path d="M18 16l8 2v10l-8-2z" fill="#2f7040"/><path d="M6 8l4 0M20 8l3 1M9 20l4 0" stroke="#2a6a3a" stroke-width="1"/></g>

</svg>
   <div class="h" style="top:2px;font-weight:bold;font-size:17.5px;transform:scaleX(1.097)">Welcome to the EPA Portal</div>
   <div class="h" style="top:24px;font-weight:bold;font-size:17.5px;transform:scaleX(1.097)">Clean Watersheds Needs Survey (CWNS)</div>
   <div class="h" style="top:45px;font-size:15.3px;transform:scaleX(1.11)">Karen Fligger</div>
   <div class="h" style="top:64px;font-size:15.3px;transform:scaleX(1.11)">PA State User</div>
   <div class="lnk" style="left:812px">Support</div><div class="lnk" style="left:883px">Help</div><div class="lnk" style="left:932px">Logout</div>
  </div>
  <div id="crumb" class="abs"><span style="left:1px;color:#0000ff;text-decoration:underline">home</span><span style="left:32px">&gt;</span><span style="left:44px">Population</span><span style="right:2px">Facility: 42005063006 - HEMPFIELD TWP - CARBON AREA SS</span></div>
  <div class="pnl abs" style="left:4px;top:136px;width:236px;height:384px">
<div class="hd abs" style="left:-1px;top:-1px;width:236px"><b>Summary</b><i style="left:202px"><svg width="13" height="13" viewBox="0 0 13 13"><path d="M3 3.500h7M6.500 3.500V11M3.500 7.500L6.500 4.500L9.500 7.500" stroke="#fff" stroke-width="1.100" fill="none"/></svg></i><i style="left:219px"><svg width="13" height="13" viewBox="0 0 13 13"><path d="M4 4l5.500 5.500M9.500 4L4 9.500" stroke="#fff" stroke-width="1.100" fill="none"/></svg></i></div>
<a style="right:.5px;top:20px;letter-spacing:-.45px">Help</a>
<div style="left:1px;top:33px;width:232px;height:330px;border:1px solid #ece9d8"></div>
<div class="cell" style="left:119px;top:36px;width:25px;height:18px;text-align:center;line-height:17px"><span style="position:static;color:#800080;letter-spacing:-.35px">Cor</span></div>
<div class="cell" style="left:146px;top:36px;width:29px;height:18px;text-align:center;line-height:17px"><span style="position:static;color:#800080;letter-spacing:-.35px">Req</span></div>
<div class="cell" style="left:177px;top:36px;width:29px;height:18px;text-align:center;line-height:17px"><span style="position:static;color:#800080;letter-spacing:-.35px">Ent</span></div>
<div class="cell" style="left:208px;top:36px;width:23px;height:18px;text-align:center;line-height:17px"><span style="position:static;color:#800080;letter-spacing:-.35px">Err</span></div>
<div class="cell" style="left:3px;top:56px;width:114px;height:22px;"><a style="left:.5px;bottom:3px;line-height:13px;letter-spacing:-0.116px">Facility</a></div>
<div class="cell" style="left:119px;top:56px;width:25px;height:22px;"></div>
<div class="cell ck" style="left:146px;top:56px;width:29px;height:22px;">✔</div>
<div class="cell ck" style="left:177px;top:56px;width:29px;height:22px;">✔</div>
<div class="cell" style="left:208px;top:56px;width:23px;height:22px;"></div>
<div class="cell" style="left:3px;top:80px;width:114px;height:18px;"><a style="left:.5px;bottom:1px;line-height:13px;letter-spacing:-0.430px">Permit</a></div>
<div class="cell" style="left:119px;top:80px;width:25px;height:18px;"></div>
<div class="cell" style="left:146px;top:80px;width:29px;height:18px;"></div>
<div class="cell" style="left:177px;top:80px;width:29px;height:18px;"></div>
<div class="cell" style="left:208px;top:80px;width:23px;height:18px;"></div>
<div class="cell" style="left:3px;top:100px;width:114px;height:22px;"><a style="left:.5px;bottom:3px;line-height:13px;letter-spacing:-0.124px">Point of Contact</a></div>
<div class="cell" style="left:119px;top:100px;width:25px;height:22px;"></div>
<div class="cell ck" style="left:146px;top:100px;width:29px;height:22px;">✔</div>
<div class="cell ck" style="left:177px;top:100px;width:29px;height:22px;">✔</div>
<div class="cell" style="left:208px;top:100px;width:23px;height:22px;"></div>
<div class="cell" style="left:3px;top:124px;width:114px;height:22px;"><a style="left:.5px;bottom:3px;line-height:13px;letter-spacing:-0.024px">Location</a></div>
<div class="cell" style="left:119px;top:124px;width:25px;height:22px;"></div>
<div class="cell ck" style="left:146px;top:124px;width:29px;height:22px;">✔</div>
<div class="cell ck" style="left:177px;top:124px;width:29px;height:22px;">✔</div>
<div class="cell" style="left:208px;top:124px;width:23px;height:22px;"></div>
<div class="cell" style="left:3px;top:148px;width:114px;height:18px;"><a style="left:.5px;bottom:1px;line-height:13px;letter-spacing:-0.060px">Needs</a></div>
<div class="cell" style="left:119px;top:148px;width:25px;height:18px;"></div>
<div class="cell" style="left:146px;top:148px;width:29px;height:18px;"></div>
<div class="cell" style="left:177px;top:148px;width:29px;height:18px;"></div>
<div class="cell" style="left:208px;top:148px;width:23px;height:18px;"></div>
<div class="cell" style="left:3px;top:168px;width:114px;height:22px;"><a style="left:.5px;bottom:3px;line-height:13px;letter-spacing:-0.250px">Population</a></div>
<div class="cell" style="left:119px;top:168px;width:25px;height:22px;"></div>
<div class="cell ck" style="left:146px;top:168px;width:29px;height:22px;">✔</div>
<div class="cell ck" style="left:177px;top:168px;width:29px;height:22px;">✔</div>
<div class="cell" style="left:208px;top:168px;width:23px;height:22px;"></div>
<div class="cell" style="left:3px;top:192px;width:114px;height:22px;"><a style="left:.5px;bottom:3px;line-height:13px;letter-spacing:-0.037px">Discharge</a></div>
<div class="cell" style="left:119px;top:192px;width:25px;height:22px;"></div>
<div class="cell ck" style="left:146px;top:192px;width:29px;height:22px;">✔</div>
<div class="cell ck" style="left:177px;top:192px;width:29px;height:22px;">✔</div>
<div class="cell" style="left:208px;top:192px;width:23px;height:22px;"></div>
<div class="cell" style="left:3px;top:216px;width:114px;height:18px;"><a style="left:.5px;bottom:1px;line-height:13px;letter-spacing:-0.344px">Pollution</a></div>
<div class="cell" style="left:119px;top:216px;width:25px;height:18px;"></div>
<div class="cell" style="left:146px;top:216px;width:29px;height:18px;"></div>
<div class="cell" style="left:177px;top:216px;width:29px;height:18px;"></div>
<div class="cell" style="left:208px;top:216px;width:23px;height:18px;"></div>
<div class="cell" style="left:3px;top:236px;width:114px;height:18px;"><a style="left:.5px;bottom:1px;line-height:13px;letter-spacing:-0.122px">Unit Process</a></div>
<div class="cell" style="left:119px;top:236px;width:25px;height:18px;"></div>
<div class="cell" style="left:146px;top:236px;width:29px;height:18px;"></div>
<div class="cell" style="left:177px;top:236px;width:29px;height:18px;"></div>
<div class="cell" style="left:208px;top:236px;width:23px;height:18px;"></div>
<div class="cell" style="left:3px;top:256px;width:114px;height:18px;"><a style="left:.5px;bottom:1px;line-height:13px;letter-spacing:-0.292px">Utility Management</a></div>
<div class="cell" style="left:119px;top:256px;width:25px;height:18px;"></div>
<div class="cell" style="left:146px;top:256px;width:29px;height:18px;"></div>
<div class="cell" style="left:177px;top:256px;width:29px;height:18px;"></div>
<div class="cell" style="left:208px;top:256px;width:23px;height:18px;"></div>
<div class="cell" style="left:3px;top:277px;width:228px;height:22px;"><span style="left:5px;top:4px;width:13px;height:13px;border:1px solid #c9c7ba;background:#fff"></span><b class="bd" style="left:24px;top:6px;letter-spacing:-.03px">Show Only Cost Curve Errors</b></div>
<div class="cell" style="left:3px;top:302px;width:228px;height:17px;"><a style="left:1px;top:2px;letter-spacing:-.08px">view all comments</a><span style="left:95px;top:2px">|</span><a style="left:104px;top:2px;letter-spacing:.34px">view sewershed</a></div>
<div class="cell" style="left:3px;top:322px;width:228px;height:18px;"><b class="bd" style="left:0;top:2px;letter-spacing:-.5px">State:</b><span style="left:34px;top:2px;letter-spacing:-.04px">Ronald Mease&nbsp; 01/28/2005</span></div>
<div class="cell" style="left:3px;top:342px;width:228px;height:18px;"><b class="bd" style="left:0;top:2px">Reviewer:</b><span style="left:58px;top:2px;letter-spacing:.03px">Mark Sievers&nbsp; 02/09/2005</span></div>
</div>
<div class="pnl abs" style="left:4px;top:526px;width:236px;height:60px">
<div class="hd abs" style="left:-1px;top:-1px;width:236px"><b style="letter-spacing:.15px;margin-left:.6px">Review Status</b><i style="left:202px"><svg width="13" height="13" viewBox="0 0 13 13"><path d="M3 3.500h7M6.500 3.500V11M3.500 7.500L6.500 4.500L9.500 7.500" stroke="#fff" stroke-width="1.100" fill="none"/></svg></i><i style="left:219px"><svg width="13" height="13" viewBox="0 0 13 13"><path d="M4 4l5.500 5.500M9.500 4L4 9.500" stroke="#fff" stroke-width="1.100" fill="none"/></svg></i></div>
<div style="left:6px;top:27px;width:224px;height:30px;border:1px solid #ece9d8"></div>
<div class="cell" style="left:9px;top:31px;width:65px;height:20px"></div><div class="cell" style="left:76px;top:31px;width:149px;height:20px"></div>
</div>
<div style="left:248px;top:132px;width:728px;height:19px;background:#fff"></div><div style="left:0;top:110px;width:976px;height:1px;background:#fff"></div><div style="left:4px;top:135px;width:236px;height:1px;background:#fff"></div>
<div style="left:244px;top:151px;width:732px;height:19px;background:#336699"></div>
<svg style="left:249px;top:132px" width="69" height="19" viewBox="0 0 69 19"><path d="M0,19 L9,0 L61,0 Q68,0.5 68,9 L68,19 Z" fill="#cccc99"/><path d="M62,0.3 Q68.5,1 68.5,9.5 L68.5,19" fill="none" stroke="#222" stroke-width=".9"/><text x="35.0" y="14.6" text-anchor="middle" font-family="Liberation Sans, sans-serif" font-size="12" fill="#003366">Facility</text></svg>
<svg style="left:319px;top:132px" width="69" height="19" viewBox="0 0 69 19"><path d="M0,19 L9,0 L61,0 Q68,0.5 68,9 L68,19 Z" fill="#cccc99"/><path d="M62,0.3 Q68.5,1 68.5,9.5 L68.5,19" fill="none" stroke="#222" stroke-width=".9"/><text x="35.0" y="14.6" text-anchor="middle" font-family="Liberation Sans, sans-serif" font-size="12" fill="#003366">Needs</text></svg>
<svg style="left:389px;top:132px" width="92" height="19" viewBox="0 0 92 19"><path d="M0,19 L9,0 L84,0 Q91,0.5 91,9 L91,19 Z" fill="#336699"/><path d="M85,0.3 Q91.5,1 91.5,9.5 L91.5,19" fill="none" stroke="#222" stroke-width=".9"/><text x="46.5" y="14.6" text-anchor="middle" font-family="Liberation Sans, sans-serif" font-size="12" fill="#fff">Population</text></svg>
<svg style="left:481px;top:132px" width="89" height="19" viewBox="0 0 89 19"><path d="M0,19 L9,0 L81,0 Q88,0.5 88,9 L88,19 Z" fill="#cccc99"/><path d="M82,0.3 Q88.5,1 88.5,9.5 L88.5,19" fill="none" stroke="#222" stroke-width=".9"/><text x="45.0" y="14.6" text-anchor="middle" font-family="Liberation Sans, sans-serif" font-size="12" fill="#003366">Discharge</text></svg>
<svg style="left:572px;top:132px" width="80" height="19" viewBox="0 0 80 19"><path d="M0,19 L9,0 L72,0 Q79,0.5 79,9 L79,19 Z" fill="#cccc99"/><path d="M73,0.3 Q79.5,1 79.5,9.5 L79.5,19" fill="none" stroke="#222" stroke-width=".9"/><text x="40.5" y="14.6" text-anchor="middle" font-family="Liberation Sans, sans-serif" font-size="12" fill="#003366">Pollution</text></svg>
  <div class="r" style="left:244px;top:192px;font-weight:bold;font-size:18px;-webkit-text-stroke:.25px #000">Population Information</div>
<svg style="left:927px;top:194px" width="18" height="17" viewBox="0 0 18 18"><rect width="18" height="18" fill="#ebebeb"/><path d="M3.5 3.5h11v7.5h-3v3l-3-3h-5z" fill="#fdfdfd" stroke="#8a8a8a" stroke-width="1"/><path d="M5.5 6h7M5.5 8.5h7" stroke="#b0b0b0" stroke-width="1"/></svg>
<div style="left:949px;top:202px;width:1px;height:11px;background:#003366"></div>
<svg style="left:954px;top:189px" width="22" height="22" viewBox="0 0 23 23"><defs><radialGradient id="hg" cx="0.4" cy="0.3" r="0.8"><stop offset="0" stop-color="#c4d8ff"/><stop offset="0.5" stop-color="#6f9af2"/><stop offset="1" stop-color="#4a78e0"/></radialGradient></defs><rect width="23" height="23" fill="#eceef4"/><circle cx="11.5" cy="11.5" r="10" fill="url(#hg)" stroke="#7d9be0" stroke-width="1"/><text x="11.5" y="17" text-anchor="middle" font-family="Liberation Sans, sans-serif" font-weight="bold" font-size="16" fill="#fff">?</text></svg>
<div style="left:244px;top:233px;width:732px;height:226px;background:#fff"></div>
<div style="left:244px;top:419px;width:732px;height:2px;background:#6a8adc"></div>
<div class="gh" style="left:247px;top:236px;width:254px"></div>
<div class="gh" style="left:504px;top:236px;width:233px">Resident Population</div>
<div class="gh" style="left:740px;top:236px;width:233px">Non- Resident Population</div>
<span class="r" style="left:504px;top:259px;letter-spacing:0">Present</span>
<span class="r" style="left:562px;top:259px;letter-spacing:0">Projected</span>
<span class="r" style="left:632px;top:259px;letter-spacing:0">Projected Year</span>
<span class="r" style="left:740px;top:259px;letter-spacing:0">Present</span>
<span class="r" style="left:798px;top:259px;letter-spacing:0">Projected</span>
<span class="r" style="left:868px;top:259px;letter-spacing:0">Projected Year</span>
<span class="r" style="left:247px;top:278px;letter-spacing:-0.18px">Receiving Collection</span>
<span class="r" style="left:504px;top:278px;">2203</span>
<span class="r" style="left:562px;top:278px;">2203</span>
<span class="r" style="left:247px;top:297px;letter-spacing:-0.2px">Upstream Collection</span>
<span class="r bd" style="left:247px;top:316px;letter-spacing:-0.04px">Total Receiving Treatment</span>
<span class="r tm" style="left:504px;top:315px;">2203</span>
<span class="r tm" style="left:562px;top:315px;">2203</span>
<span class="r" style="left:247px;top:335px;letter-spacing:-0.07px">Decentralized Systems</span>
<span class="r" style="left:247px;top:354px;letter-spacing:-0.08px">Individual Sewage Disposal Systems</span>
<span class="r bd" style="left:247px;top:373px;letter-spacing:-0.16px">Total (Excluding Upstream)</span>
<span class="r tm" style="left:504px;top:372px;">2203</span>
<span class="r tm" style="left:562px;top:372px;">2203</span>
<div style="left:252px;top:399px;width:13px;height:13px;border:1px solid #1d5281;background:linear-gradient(135deg,#dcdcd7,#fff)"></div>
<span class="r" style="left:277px;top:401px;font-size:10.4px;letter-spacing:0">Small Community Exception Flag</span>
 </div>

 <div id="sb" class="abs">
  <div class="sbb" style="top:2px"><svg style="left:1px;top:3px" width="9" height="6" viewBox="0 0 9 6"><path d="M.7 5.300L4.500 1.500l3.800 3.800" stroke="#fff" stroke-width="2" fill="none"/></svg></div>
  <div id="thumb"><svg style="left:3px;top:196px" width="7" height="8" viewBox="0 0 7 8"><path d="M0 .5h7M0 2.500h7M0 4.500h7M0 6.500h7" stroke="#d6ddc0" stroke-width="1"/></svg></div>
  <div class="sbb" style="top:546px"><svg style="left:1px;top:3px" width="9" height="6" viewBox="0 0 9 6"><path d="M.7.700L4.500 4.500l3.800-3.800" stroke="#fff" stroke-width="2" fill="none"/></svg></div>
 </div>
 <div class="abs" style="left:949px;top:118px;width:2px;height:52px;border-left:1px solid #ddd9c8;border-right:1px solid #fff"></div>
 <div id="bL" class="abs"></div><div id="bL2" class="abs"></div><div id="bT2" class="abs"></div><div id="bR" class="abs"></div><div id="bR2" class="abs"></div><div id="bB" class="abs"></div>
</div>
<div id="task" class="abs">
<div id="start" class="abs"><svg style="left:10px;top:5px" width="20" height="19" viewBox="0 0 17 16"><path d="M2 2.500c2-1.500 4-1.500 6 0l-1.300 5c-2-1.500-4-1.500-6 0z" fill="#e8592a"/><path d="M9 2.800c2 1.300 4 1.300 6 0l-1.300 5c-2 1.300-4 1.300-6 0z" fill="#6cb83a"/><path d="M.5 8.500c2-1.500 4-1.500 6 0l-1.300 5c-2-1.500-4-1.500-6 0z" fill="#3b8fe0"/><path d="M7.500 8.800c2 1.300 4 1.300 6 0l-1.300 5c-2 1.300-4 1.300-6 0z" fill="#f5c330"/></svg><b>start</b></div>
<div class="tk" style="left:107px;width:142px"><svg width="17" height="16" viewBox="0 0 17 16"><path d="M1 3h5l2 2h8v9H1z" fill="#f2c75a" stroke="#a87a1a" stroke-width=".9"/><circle cx="8" cy="9" r="3.500" fill="#dcecfb" stroke="#7a9cc8" stroke-width="1.100"/><path d="M10.500 11.500l3 3" stroke="#a87a1a" stroke-width="1.600"/></svg><span>Training</span></div>
<div class="tk" style="left:252px;width:142px"><svg width="17" height="16" viewBox="0 0 17 16"><rect x="1" y="1" width="15" height="14" fill="#e9f3e6" stroke="#2f7d32" stroke-width="1.200"/><path d="M4 4l8 8M12 4l-8 8" stroke="#1e7a2a" stroke-width="2.400"/></svg><span>Microsoft Excel - ...</span></div>
<div class="tk" style="left:397px;width:141px"><svg width="17" height="17" viewBox="0 0 17 17"><circle cx="8.500" cy="8.500" r="7.800" fill="#f0a030" stroke="#b8651a" stroke-width="1.200"/><path d="M5.500 6v6M8.500 6v6M11.500 6v6" stroke="#7a3a0a" stroke-width="1.500"/><path d="M4.500 4.500h8" stroke="#7a3a0a" stroke-width="1"/></svg><span>RE: Septic data sh...</span></div>
<div class="tk on" style="left:540px;width:143px"><svg width="17" height="17" viewBox="0 0 17 17"><path d="M5 .5h8l3.500 3.500v12.500H5z" fill="#fff" stroke="#9a9a9a" stroke-width=".8"/><circle cx="7" cy="9.500" r="4.800" fill="none" stroke="#2a7be0" stroke-width="2.200"/><path d="M2.500 9.500h9" stroke="#2a7be0" stroke-width="1.800"/><path d="M1 13c2-7 8-10 13-8" stroke="#f2b330" stroke-width="1.200" fill="none"/></svg><span style="letter-spacing:.1px">Population_Page -...</span></div>
<div class="tk" style="left:686px;width:143px"><svg width="17" height="17" viewBox="0 0 17 17"><rect x="3" y="1" width="13" height="15" fill="#fff" stroke="#5a6fb8" stroke-width="1"/><rect x="1" y="3" width="10" height="10" fill="#2a4fa8"/><text x="6" y="11.500" text-anchor="middle" font-family="Liberation Sans, sans-serif" font-weight="bold" font-size="9" fill="#fff">W</text><path d="M12 5h3M12 8h3M12 11h3" stroke="#8a9ad0" stroke-width="1"/></svg><span style="letter-spacing:-.2px">Document1 - Micro...</span></div>
<svg style="left:838px;top:6px" width="16" height="18" viewBox="0 0 16 18"><path d="M9 2l4 4-4 5-4-4z" fill="#d8d8d8" stroke="#111" stroke-width="1.200"/><path d="M6 8l-3 4c-1 2 1 4 3 3" stroke="#111" stroke-width="1.300" fill="none"/></svg>
<svg style="left:859px;top:6px" width="18" height="18" viewBox="0 0 18 18"><rect x="1" y="1" width="16" height="11" fill="#fff" stroke="#111" stroke-width="1.300"/><rect x="1" y="1" width="16" height="3" fill="#1a2a8a"/><path d="M3 7h5M3 9.500h4" stroke="#111"/><circle cx="11" cy="9" r="2.500" fill="#ddd" stroke="#111"/><path d="M10 11l-3 5" stroke="#111" stroke-width="1.300"/></svg>
<svg style="left:880px;top:6px" width="18" height="18" viewBox="0 0 18 18"><path d="M2 13l9-9 2 2-9 9z" fill="#f2d23a" stroke="#111" stroke-width="1"/><path d="M1 16h8" stroke="#111" stroke-width="1.300"/><rect x="11" y="11" width="5" height="4" fill="#1a3ad8"/></svg>
<div style="left:898px;top:3px;width:20px;height:24px;border:1px solid #6f7d50;background:#93a26c;border-radius:2px"></div>
<svg style="left:900px;top:6px" width="17" height="19" viewBox="0 0 17 19"><path d="M2 6l5-5 5 5z" fill="#e4e4e4" stroke="#111" stroke-width="1"/><circle cx="6" cy="13" r="3.500" fill="#f2f2f2" stroke="#111" stroke-width="1"/><path d="M8 16l7-11" stroke="#111" stroke-width="1.600"/></svg>
<div id="tray" class="abs"><span>2:41 PM</span></div>
<svg style="left:921px;top:5px" width="20" height="20" viewBox="0 0 20 20"><defs><radialGradient id="gt" cx=".4" cy=".35" r=".7"><stop offset="0" stop-color="#e0a888"/><stop offset=".7" stop-color="#b87850"/><stop offset="1" stop-color="#98603c"/></radialGradient></defs><circle cx="10" cy="10" r="9.300" fill="url(#gt)" stroke="#f0e4c0" stroke-width=".8"/><path d="M12 5.500L7.500 10l4.500 4.500" stroke="#fff" stroke-width="2.200" fill="none"/></svg>
<svg style="left:942px;top:6px" width="18" height="18" viewBox="0 0 18 18"><path d="M1 6h4l5-4v13l-5-4H1z" fill="#8a8a8a" stroke="#444" stroke-width=".9"/><path d="M11 5c2 2 2 5 0 7" stroke="#666" fill="none"/><circle cx="12" cy="12" r="4.300" fill="#fff" stroke="#d8201a" stroke-width="1.700"/><path d="M9 9l6 6" stroke="#d8201a" stroke-width="1.700"/></svg>
</div>
</body></html>
